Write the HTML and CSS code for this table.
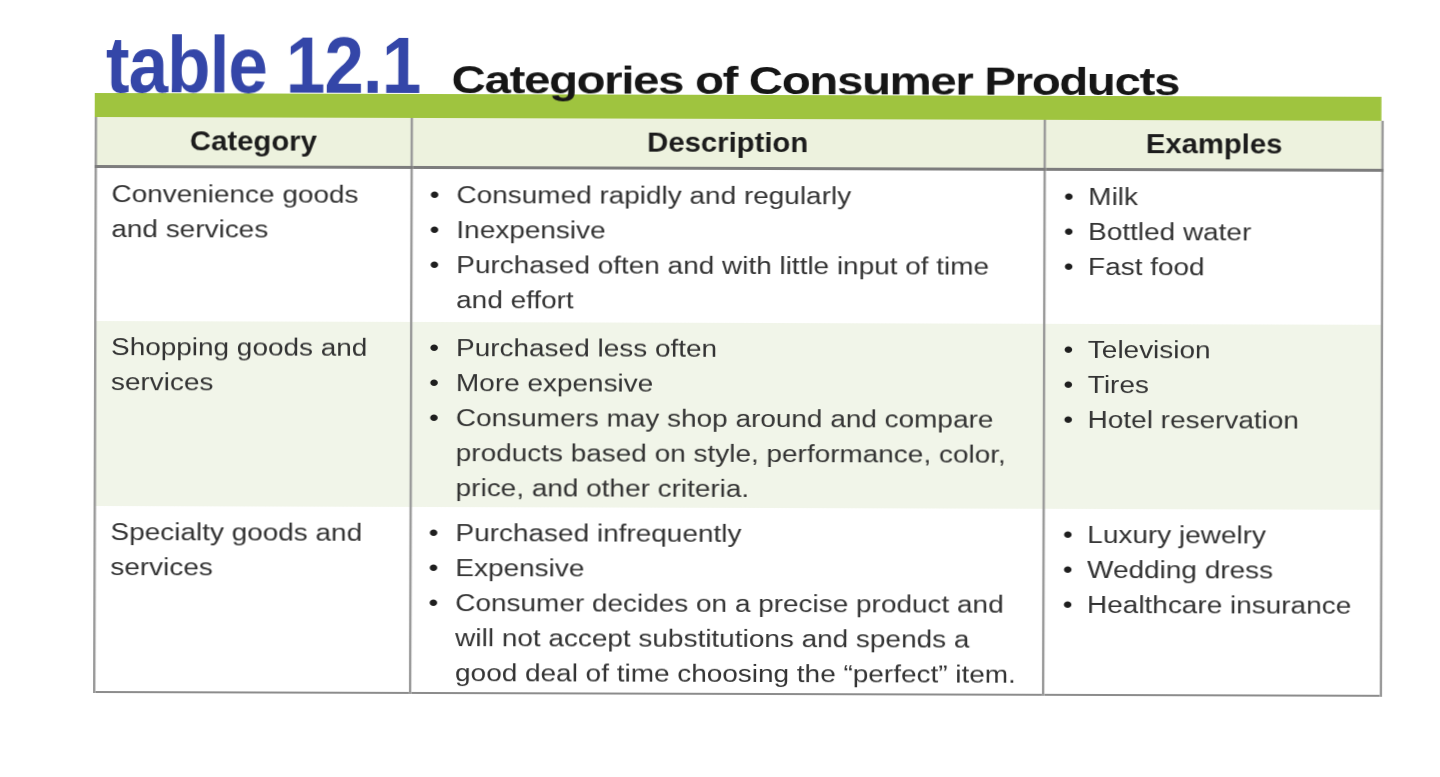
FILE: index.html
```html
<!DOCTYPE html>
<html lang="en">
<head>
<meta charset="utf-8">
<title>Table 12.1 Categories of Consumer Products</title>
<link rel="stylesheet" href="styles.css">
</head>
<body>
<div class="page">
  <div class="figure">
    <div class="title-row">
      <span class="tnum">table 12.1</span>
      <span class="ttl">Categories of Consumer Products</span>
    </div>
    <div class="bar"></div>
    <table class="products">
      <colgroup><col class="c1"><col class="c2"><col class="c3"></colgroup>
      <thead>
        <tr><th><span class="hl">Category</span></th><th><span class="hl">Description</span></th><th><span class="hl">Examples</span></th></tr>
      </thead>
      <tbody>
        <tr class="r1">
          <td class="cat">Convenience goods<br>and services</td>
          <td>
            <ul class="desc">
              <li><span>Consumed rapidly and regularly</span></li>
              <li><span>Inexpensive</span></li>
              <li><span>Purchased often and with little input of time<br>and effort</span></li>
            </ul>
          </td>
          <td>
            <ul class="ex">
              <li><span>Milk</span></li>
              <li><span>Bottled water</span></li>
              <li><span>Fast food</span></li>
            </ul>
          </td>
        </tr>
        <tr class="r2">
          <td class="cat">Shopping goods and<br>services</td>
          <td>
            <ul class="desc">
              <li><span>Purchased less often</span></li>
              <li><span>More expensive</span></li>
              <li><span>Consumers may shop around and compare<br>products based on style, performance, color,<br>price, and other criteria.</span></li>
            </ul>
          </td>
          <td>
            <ul class="ex">
              <li><span>Television</span></li>
              <li><span>Tires</span></li>
              <li><span>Hotel reservation</span></li>
            </ul>
          </td>
        </tr>
        <tr class="r3">
          <td class="cat">Specialty goods and<br>services</td>
          <td>
            <ul class="desc">
              <li><span>Purchased infrequently</span></li>
              <li><span>Expensive</span></li>
              <li><span>Consumer decides on a precise product and<br>will not accept substitutions and spends a<br>good deal of time choosing the “perfect” item.</span></li>
            </ul>
          </td>
          <td>
            <ul class="ex">
              <li><span>Luxury jewelry</span></li>
              <li><span>Wedding dress</span></li>
              <li><span>Healthcare insurance</span></li>
            </ul>
          </td>
        </tr>
      </tbody>
    </table>
  </div>
</div>
</body>
</html>
```

FILE: styles.css
```css
html, body {
  margin: 0;
  padding: 0;
  background: #ffffff;
}

.page {
  padding: 20px 0 0 95px;
  height: 757px;
  overflow: hidden;
}

.figure {
  width: 1059px;
  transform-origin: 0 0;
  transform: rotate(0.17deg) scaleX(1.215);
  filter: blur(0.35px);
}

.title-row {
  display: flex;
  align-items: flex-end;
  height: 73px;
  padding-left: 9px;
  white-space: nowrap;
}

/* condensed bold numeral title: Liberation Sans Bold squeezed to a condensed width */
.tnum {
  display: inline-block;
  font-family: "Liberation Sans", Arial, sans-serif;
  font-weight: bold;
  font-size: 80px;
  line-height: 57px;
  letter-spacing: -1px;
  color: #3446a8;
  transform-origin: 0 100%;
  transform: scaleX(0.73);
  margin-right: -103px;
}

.ttl {
  font-family: "Liberation Sans", Arial, sans-serif;
  font-weight: bold;
  font-size: 39px;
  line-height: 29px;
  letter-spacing: -1.1px;
  color: #161616;
  margin-left: 33px;
}

.bar {
  height: 24px;
  background: #9fc43f;
}

.products {
  width: 1059px;
  table-layout: fixed;
  border-collapse: collapse;
  border: 2px solid #8c8c8c;
  border-top: none;
}

.c1 { width: 260px; }
.c2 { width: 521px; }
.c3 { width: 278px; }

.products th {
  height: 48px;
  padding: 0;
  background: #edf2de;
  text-align: center;
  vertical-align: middle;
  border-bottom: 3px solid #7d7d7d;
  border-left: 2px solid #9a9a9a;
  border-right: 2px solid #9a9a9a;
}

.hl {
  display: inline-block;
  font-family: "Liberation Sans", Arial, sans-serif;
  font-weight: bold;
  font-size: 28px;
  line-height: 34px;
  color: #1c1c1c;
  transform: scaleX(0.86);
}

.products td {
  padding: 9px 0 1px;
  vertical-align: top;
  font-family: "Liberation Sans", Arial, sans-serif;
  font-size: 23px;
  line-height: 35px;
  color: #333333;
  white-space: nowrap;
  border-left: 2px solid #9a9a9a;
  border-right: 2px solid #9a9a9a;
}

.products .r1 td {
  padding-bottom: 4px;
}

.products .r2 td {
  background: #f1f5e9;
}

.products td.cat {
  padding-left: 12px;
}

.desc, .ex {
  list-style: none;
  margin: 0;
}

.desc { padding: 0 0 0 14px; }
.ex { padding: 0 0 0 15px; }

.desc li, .ex li {
  display: flex;
}

.desc li::before, .ex li::before {
  content: "•";
  flex: none;
  color: #1e1e1e;
}

.desc li::before { width: 22px; }
.ex li::before { width: 20px; }
```
